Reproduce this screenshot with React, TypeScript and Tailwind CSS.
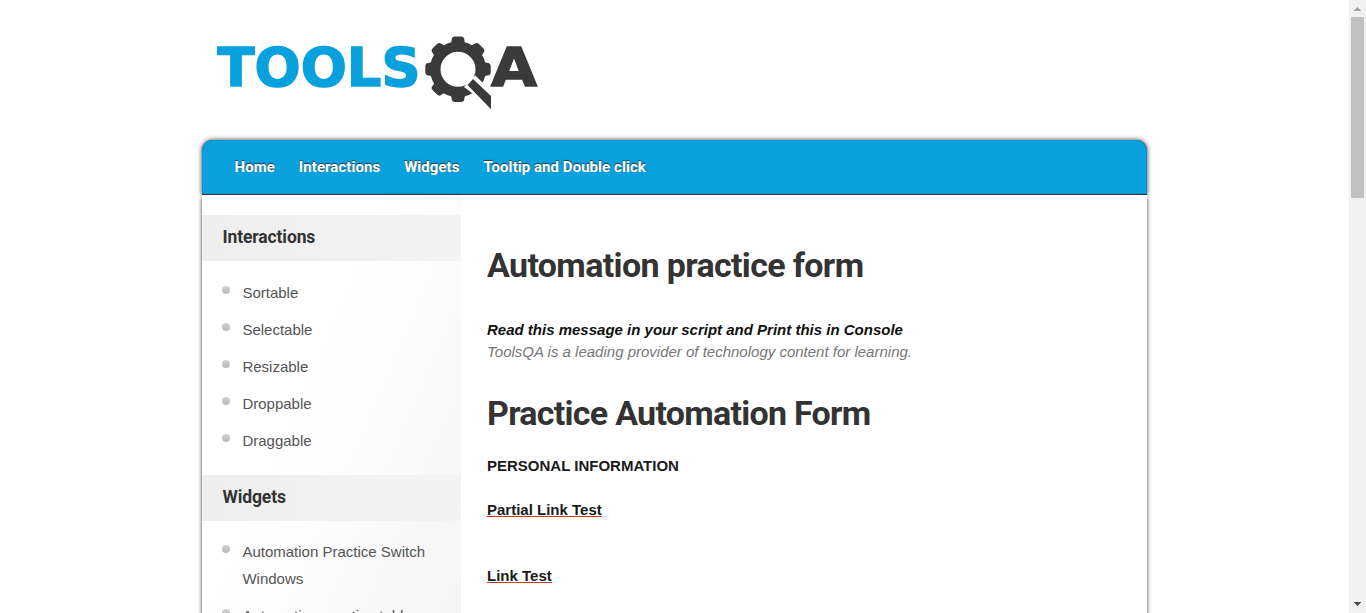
const navItems = ['Home', 'Interactions', 'Widgets', 'Tooltip and Double click'];
const interactions = ['Sortable', 'Selectable', 'Resizable', 'Droppable', 'Draggable'];
const widgets = ['Automation Practice Switch Windows', 'Automation practice table'];
const teeth = [0, 45, 90, 135, 180, 225, 270, 315];

function Logo() {
  return (
    <svg width="350" height="90" viewBox="210 30 350 90" role="img" aria-label="ToolsQA" className="block">
      <g fontFamily="'DejaVu Sans'" fontWeight="700" fontSize="54" strokeWidth="1.5">
        <text x="217.500" y="86" fill="#08a1dd" stroke="#08a1dd" textLength="203" lengthAdjust="spacingAndGlyphs">TOOLS</text>
        <text x="491" y="86" fill="#3a3a3a" stroke="#3a3a3a" textLength="46" lengthAdjust="spacingAndGlyphs">A</text>
      </g>
      <g fill="#3a3a3a">
        <circle cx="458" cy="69.300" r="22.700" fill="none" stroke="#3a3a3a" strokeWidth="10.400" />
        {teeth.map((a) => (
          <path key={a} d="M447.500 45 Q451.500 44 451.700 39.500 Q452 36.600 455 36.600 H461 Q464 36.600 464.300 39.500 Q464.500 44 468.500 45 Z" transform={`rotate(${a} 458 69.300)`} />
        ))}
        <path d="M464 87 L475.300 75.500 L482 82 L494 94 V114 L470 91.500 Z" fill="#fff" />
        <path d="M467.500 85 L473 79 L491 96 V109.300 Z" />
      </g>
    </svg>
  );
}

function SideSection({ title, items, pad }: { title: string; items: string[]; pad: string }) {
  return (
    <section>
      <h3 className="h-[46px] bg-linear-to-r from-[#eeeeee] to-[#f3f3f3] pl-[20.5px] pt-px font-[Roboto,sans-serif] text-[17.5px] font-bold leading-[43px] tracking-[-0.12px] text-[#333]">{title}</h3>
      <ul className={pad}>
        {items.map((item) => (
          <li key={item} className="mb-2.5 flex leading-[27px]">
            <span className="mr-[12.4px] mt-[7px] h-2 w-2 shrink-0 rounded-full bg-linear-to-b from-[#d2d2d2] to-[#b8b8b8]" />
            <a>{item}</a>
          </li>
        ))}
      </ul>
    </section>
  );
}

function Scrollbar() {
  return (
    <div className="flex h-full w-[17px] shrink-0 flex-col items-center bg-[#f1f1f1]">
      <svg width="17" height="17" shapeRendering="crispEdges"><path d="M5 11 L8.500 7 L12 11 Z" fill="#a3a3a3" /></svg>
      <div className="h-[181px] w-[13px] bg-[#c1c1c1]" />
      <svg width="17" height="17" className="mt-auto" shapeRendering="crispEdges"><path d="M5 6 H12 L8.500 10 Z" fill="#505050" /></svg>
    </div>
  );
}

export default function App() {
  return (
    <div className="flex h-[613px] w-full overflow-hidden bg-white font-['Liberation_Sans',Arial,sans-serif] text-[15px] text-[#555]">
      <div className="flex-1 pl-[202px]">
        <header className="h-[140px] pl-2 pt-[30px]"><Logo /></header>
        <div className="w-[945px]">
          <nav className="flex h-[55px] gap-6 rounded-t-[10px] border-b border-[#333] bg-[#08a1dd] pl-[32.5px] font-[Roboto,sans-serif] text-[15px] font-bold leading-[54px] tracking-[0.05px] text-white shadow-[0_0_5px_#333,inset_0_0_1px_#333] [text-shadow:0_-1px_1px_#333]">
            {navItems.map((item) => <a key={item}>{item}</a>)}
          </nav>
          <div className="flex h-[600px] bg-white shadow-[0_3px_4px_#333]">
            <aside className="w-[259px] bg-linear-to-br from-white from-35% to-[#f2f2f2] to-100% pt-5">
              <SideSection title="Interactions" items={interactions} pad="h-[214px] pl-5 pr-6 pt-[18px]" />
              <SideSection title="Widgets" items={widgets} pad="pl-5 pr-6 pt-[17px]" />
            </aside>
            <main className="pl-[26px] pt-[46px]">
              <h1 className="h-12 whitespace-nowrap font-[Roboto,sans-serif] text-[34px] font-bold leading-[48px] tracking-[-0.65px] text-[#333]">Automation practice form</h1>
              <div className="mt-[30px] italic leading-[22px] text-[#777]">
                <p className="font-bold text-[#111]">Read this message in your script and Print this in Console</p>
                <p>ToolsQA is a leading provider of technology content for learning.</p>
              </div>
              <h1 className="mt-[26px] h-12 whitespace-nowrap font-[Roboto,sans-serif] text-[34px] font-bold leading-[48px] tracking-[-0.73px] text-[#333]">Practice Automation Form</h1>
              <div className="flex flex-col items-start pt-[18px] font-bold leading-[22px] text-[#1a1a1a]">
                <strong>PERSONAL INFORMATION</strong>
                <a className="mt-[27px] border-b border-[#bd3c13] leading-[12px]">Partial Link Test</a>
                <a className="mt-[53px] border-b border-[#bd3c13] leading-[12px]">Link Test</a>
              </div>
            </main>
          </div>
        </div>
      </div>
      <Scrollbar />
    </div>
  );
}
